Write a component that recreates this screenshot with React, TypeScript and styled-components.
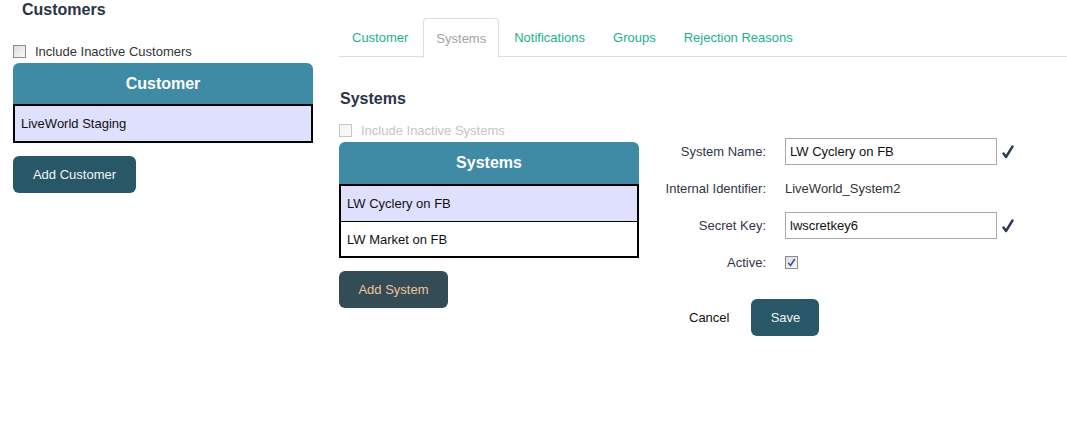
import React from "react";
import styled, { createGlobalStyle } from "styled-components";

const Global = createGlobalStyle`
  html, body { margin: 0; padding: 0; background: #fff; }
  body { font-family: "Liberation Sans", Arial, sans-serif; font-size: 13px; color: #333; }
  * { box-sizing: border-box; }
`;

const Page = styled.div`
  display: flex;
  align-items: flex-start;
  width: 1067px;
  height: 434px;
`;

const LeftColumn = styled.div`
  width: 300px;
  margin-left: 13px;
  display: flex;
  flex-direction: column;
`;

const RightColumn = styled.div`
  flex: 1;
  margin-left: 26px;
  padding-top: 18px;
  display: flex;
  flex-direction: column;
`;

const Title = styled.h2<{ $indent?: number }>`
  margin: 0;
  margin-left: ${(p) => p.$indent ?? 0}px;
  font-size: 16px;
  line-height: 20px;
  font-weight: bold;
  color: #2a3546;
`;

const CheckRow = styled.label<{ $disabled?: boolean }>`
  display: flex;
  align-items: center;
  gap: 9px;
  height: 14px;
  color: ${(p) => (p.$disabled ? "#c4c4c4" : "#333")};
`;

const Box = styled.span<{ $disabled?: boolean }>`
  width: 13px;
  height: 13px;
  flex: none;
  border: 1px solid ${(p) => (p.$disabled ? "#c6c6c6" : "#8d8d8d")};
  background: ${(p) =>
    p.$disabled ? "#f6f6f6" : "linear-gradient(135deg, #dcdcdc, #f8f8f8)"};
  display: flex;
  align-items: center;
  justify-content: center;
`;

const Table = styled.div`
  display: flex;
  flex-direction: column;
  width: 300px;
`;

const TableHeader = styled.div<{ $h: number }>`
  height: ${(p) => p.$h}px;
  background: #3f8aa4;
  border-radius: 6px 6px 0 0;
  color: #fff;
  font-size: 16px;
  font-weight: bold;
  display: flex;
  align-items: center;
  justify-content: center;
`;

const TableBody = styled.div`
  border: 2px solid #000;
  display: flex;
  flex-direction: column;
`;

const TableRow = styled.div<{ $selected?: boolean }>`
  height: 35px;
  padding-left: 6px;
  display: flex;
  align-items: center;
  background: ${(p) => (p.$selected ? "#dfdffe" : "#fff")};
  color: #111;
  font-size: 13px;
  & + & { border-top: 1px solid #000; }
`;

const Button = styled.button<{ $w: number; $variant?: "alt" }>`
  width: ${(p) => p.$w}px;
  height: 37px;
  border: none;
  border-radius: 6px;
  background: ${(p) => (p.$variant === "alt" ? "#334c55" : "#285868")};
  color: ${(p) => (p.$variant === "alt" ? "#f2c39c" : "#f4f4f4")};
  font-family: "Liberation Sans", Arial, sans-serif;
  font-size: 13px;
  padding: 0;
  cursor: pointer;
`;

const Tabs = styled.div`
  display: flex;
  height: 39px;
  border-bottom: 1px solid #dedede;
`;

const Tab = styled.div<{ $active?: boolean }>`
  height: 39px;
  padding: 0 12px 1px;
  margin-right: 2px;
  display: flex;
  align-items: center;
  color: ${(p) => (p.$active ? "#a3a3a3" : "#22b08e")};
  border: 1px solid ${(p) => (p.$active ? "#dedede" : "transparent")};
  border-bottom: none;
  border-radius: 4px 4px 0 0;
  background: ${(p) => (p.$active ? "#fff" : "transparent")};
  margin-bottom: ${(p) => (p.$active ? "-1px" : "0")};
  height: ${(p) => (p.$active ? "40px" : "39px")};
  font-size: 13px;
`;

const Section = styled.div`
  display: flex;
  flex-direction: column;
  padding-left: 1px;
`;

const Split = styled.div`
  display: flex;
  align-items: flex-start;
  margin-top: 14px;
  margin-left: -1px;
`;

const ListColumn = styled.div`
  width: 300px;
  display: flex;
  flex-direction: column;
`;

const Form = styled.div`
  margin-left: 7px;
  margin-top: 15px;
  display: flex;
  flex-direction: column;
`;

const FormGrid = styled.div`
  display: grid;
  grid-template-columns: 120px 212px 20px;
  column-gap: 19px;
  row-gap: 10px;
  grid-auto-rows: 27px;
  align-items: center;
`;

const Label = styled.div`
  text-align: right;
  color: #33344a;
`;

const Input = styled.input`
  width: 212px;
  height: 27px;
  border: 1px solid #a9a9a9;
  padding: 0 4px;
  font-family: "Liberation Sans", Arial, sans-serif;
  font-size: 13px;
  color: #111;
  outline: none;
`;

const Value = styled.div`
  color: #333;
`;

const Tick = styled.span`
  display: flex;
  align-items: center;
  margin-left: -14px;
`;

const Actions = styled.div`
  display: flex;
  align-items: center;
  margin-top: 23px;
  padding-left: 43px;
  gap: 22px;
`;

const LinkButton = styled.span`
  color: #111;
  font-size: 13px;
  cursor: pointer;
`;

const CheckMark = () => (
  <svg width="12" height="14" viewBox="0 0 12 14">
    <path d="M1.5 8.5 L4 12 L10.5 1.5" fill="none" stroke="#283c58" strokeWidth="2.4" strokeLinecap="round" strokeLinejoin="round" />
  </svg>
);

const SmallCheck = () => (
  <svg width="9" height="9" viewBox="0 0 9 9">
    <path d="M1.2 4.8 L3.5 7.5 L7.8 1" fill="none" stroke="#3c4fa8" strokeWidth="1.6" />
  </svg>
);

export default function App() {
  return (
    <>
      <Global />
      <Page>
        <LeftColumn>
          <Title $indent={9}>Customers</Title>
          <CheckRow style={{ marginTop: 24 }}>
            <Box />
            Include Inactive Customers
          </CheckRow>
          <Table style={{ marginTop: 5 }}>
            <TableHeader $h={41}>Customer</TableHeader>
            <TableBody>
              <TableRow $selected>LiveWorld Staging</TableRow>
            </TableBody>
          </Table>
          <Button $w={123} style={{ marginTop: 13 }}>Add Customer</Button>
        </LeftColumn>
        <RightColumn>
          <Tabs>
            <Tab>Customer</Tab>
            <Tab $active>Systems</Tab>
            <Tab>Notifications</Tab>
            <Tab>Groups</Tab>
            <Tab>Rejection Reasons</Tab>
          </Tabs>
          <Section>
            <Title style={{ marginTop: 32 }}>Systems</Title>
            <Split>
              <ListColumn>
                <CheckRow $disabled>
                  <Box $disabled />
                  Include Inactive Systems
                </CheckRow>
                <Table style={{ marginTop: 5 }}>
                  <TableHeader $h={42}>Systems</TableHeader>
                  <TableBody>
                    <TableRow $selected>LW Cyclery on FB</TableRow>
                    <TableRow>LW Market on FB</TableRow>
                  </TableBody>
                </Table>
                <Button $w={109} $variant="alt" style={{ marginTop: 13 }}>Add System</Button>
              </ListColumn>
              <Form>
                <FormGrid>
                  <Label>System Name:</Label>
                  <Input defaultValue="LW Cyclery on FB" />
                  <Tick><CheckMark /></Tick>
                  <Label>Internal Identifier:</Label>
                  <Value>LiveWorld_System2</Value>
                  <span />
                  <Label>Secret Key:</Label>
                  <Input defaultValue="lwscretkey6" />
                  <Tick><CheckMark /></Tick>
                  <Label>Active:</Label>
                  <Box><SmallCheck /></Box>
                  <span />
                </FormGrid>
                <Actions>
                  <LinkButton>Cancel</LinkButton>
                  <Button $w={68}>Save</Button>
                </Actions>
              </Form>
            </Split>
          </Section>
        </RightColumn>
      </Page>
    </>
  );
}
